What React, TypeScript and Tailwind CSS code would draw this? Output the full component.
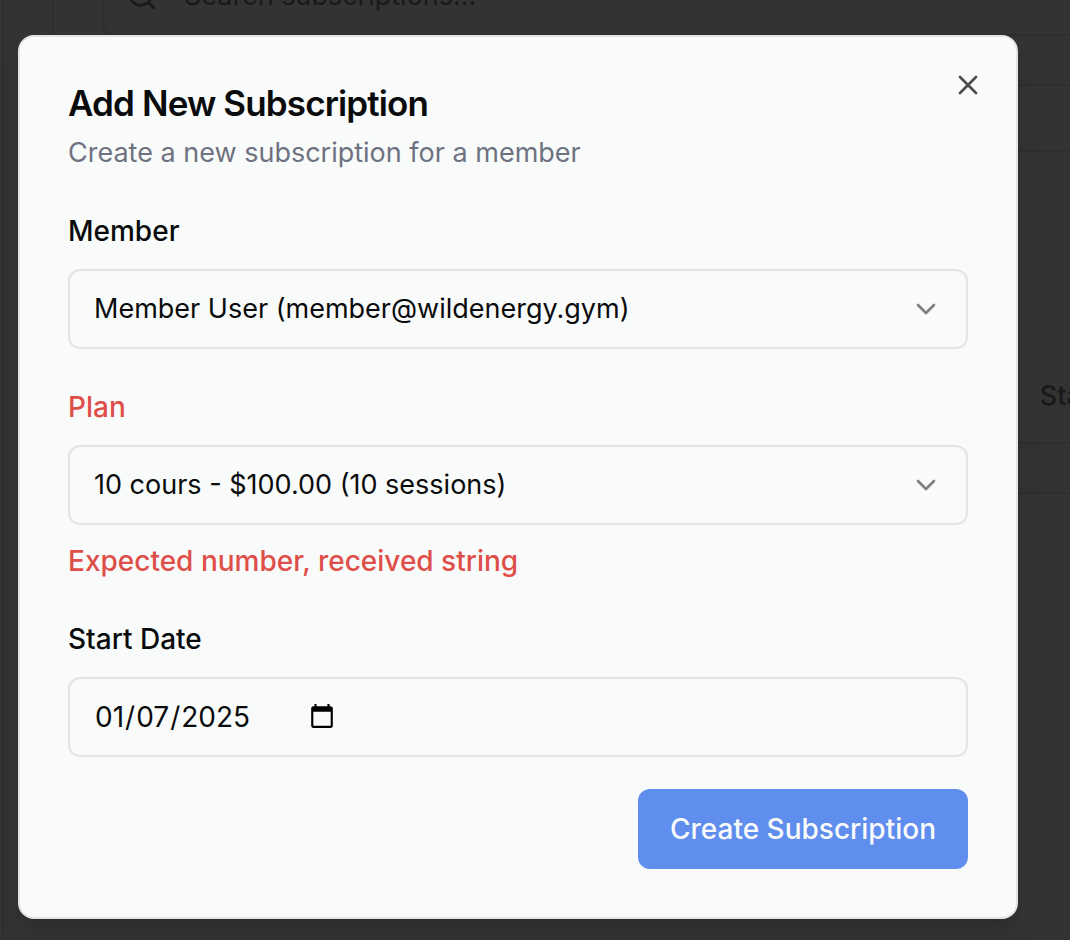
import React from "react";
import { ChevronDown, Search, X } from "lucide-react";

const fieldBox =
  "block h-20 w-full appearance-none rounded-xl border-2 border-[#e3e4ea] bg-transparent leading-10 text-[#0a0b0d] outline-none";

function Field({
  id,
  label,
  error,
  children,
}: {
  id: string;
  label: string;
  error?: string;
  children: React.ReactNode;
}) {
  return (
    <div className="flex flex-col gap-4">
      <label
        htmlFor={id}
        className={
          error
            ? "block pt-1 text-[28px] font-medium leading-11 text-[#df4f4a]"
            : "block pt-1 text-[28px] font-medium leading-11 text-[#0a0b0d]"
        }
      >
        {label}
      </label>
      {children}
      {error && (
        <p className="text-[28px] font-medium leading-10 text-[#df4f4a]">{error}</p>
      )}
    </div>
  );
}

function SelectBox({ id, value }: { id: string; value: string }) {
  return (
    <div className="relative">
      <select id={id} defaultValue={value} className={`${fieldBox} pl-6 pr-20 text-[27px]`}>
        <option value={value}>{value}</option>
      </select>
      <ChevronDown
        className="pointer-events-none absolute right-[26px] top-6 size-8 text-[#7f8080]"
        strokeWidth={2}
      />
    </div>
  );
}

function Backdrop() {
  return (
    <div className="flex min-h-screen overflow-hidden bg-[#333333]" aria-hidden="true">
      <div className="w-1 shrink-0 border-r-2 border-[#2e2e2e]" />
      <div className="flex min-w-0 grow flex-col gap-16 pl-12">
        <div className="border-b-2 border-l-2 border-[#2e2e2e] pb-12 pl-12">
          <div className="flex h-9 items-end gap-[26px] rounded-bl-xl border-b-2 border-l-2 border-[#2e2e2e] pb-[22px] pl-[22px] text-[#17191c]">
            <Search className="size-8 shrink-0" strokeWidth={2} />
            <span className="text-[27px] leading-8">Search subscriptions...</span>
          </div>
        </div>
        <div className="border-y-2 border-l-2 border-[#2e2e2e]">
          <div className="flex h-73 items-end justify-end border-b-2 border-[#2e2e2e] pb-6">
            <span className="-mr-8 text-[27px] font-medium leading-11 text-[#17191c]">Start</span>
          </div>
          <div className="h-12" />
        </div>
      </div>
    </div>
  );
}

export default function App() {
  return (
    <div className="font-['Inter',sans-serif]">
      <Backdrop />
      <div className="absolute inset-0 pb-5 pl-[18px] pr-[52px] pt-[35px]">
        <div
          role="dialog"
          aria-labelledby="dialog-title"
          className="relative rounded-2xl border-2 border-[#e3e4ea] bg-[#f9fbfa] p-12 shadow-[0_20px_30px_-6px_rgba(0,0,0,0.1),0_8px_12px_-8px_rgba(0,0,0,0.1)]"
        >
          <button
            type="button"
            aria-label="Close"
            className="absolute right-8 top-8 text-[#4b4c4d]"
          >
            <X className="size-8" strokeWidth={2} />
          </button>
          <form className="flex flex-col gap-8" onSubmit={(e) => e.preventDefault()}>
            <div className="flex flex-col gap-3">
              <h2
                id="dialog-title"
                className="text-[35px] font-semibold leading-9 tracking-tight text-[#0a0b0d]"
              >
                Add New Subscription
              </h2>
              <p className="text-[27px] leading-10 text-[#6e7280]">
                Create a new subscription for a member
              </p>
            </div>
            <Field id="member" label="Member">
              <SelectBox id="member" value="Member User (member@wildenergy.gym)" />
            </Field>
            <Field id="plan" label="Plan" error="Expected number, received string">
              <SelectBox id="plan" value="10 cours - $100.00 (10 sessions)" />
            </Field>
            <Field id="start" label="Start Date">
              <input
                id="start"
                type="date"
                defaultValue="2025-01-07"
                className={`${fieldBox} px-6 text-[28px] [&::-webkit-datetime-edit]:flex-none [&::-webkit-datetime-edit]:w-[212px] [&::-webkit-calendar-picker-indicator]:m-0 [&::-webkit-calendar-picker-indicator]:ml-1 [&::-webkit-calendar-picker-indicator]:size-7 [&::-webkit-calendar-picker-indicator]:p-0`}
              />
            </Field>
            <div className="flex justify-end">
              <button
                type="submit"
                className="h-20 rounded-xl bg-[#608eef] px-8 text-[28px] font-medium leading-10 text-[#f9fbfa]"
              >
                Create Subscription
              </button>
            </div>
          </form>
        </div>
      </div>
    </div>
  );
}
